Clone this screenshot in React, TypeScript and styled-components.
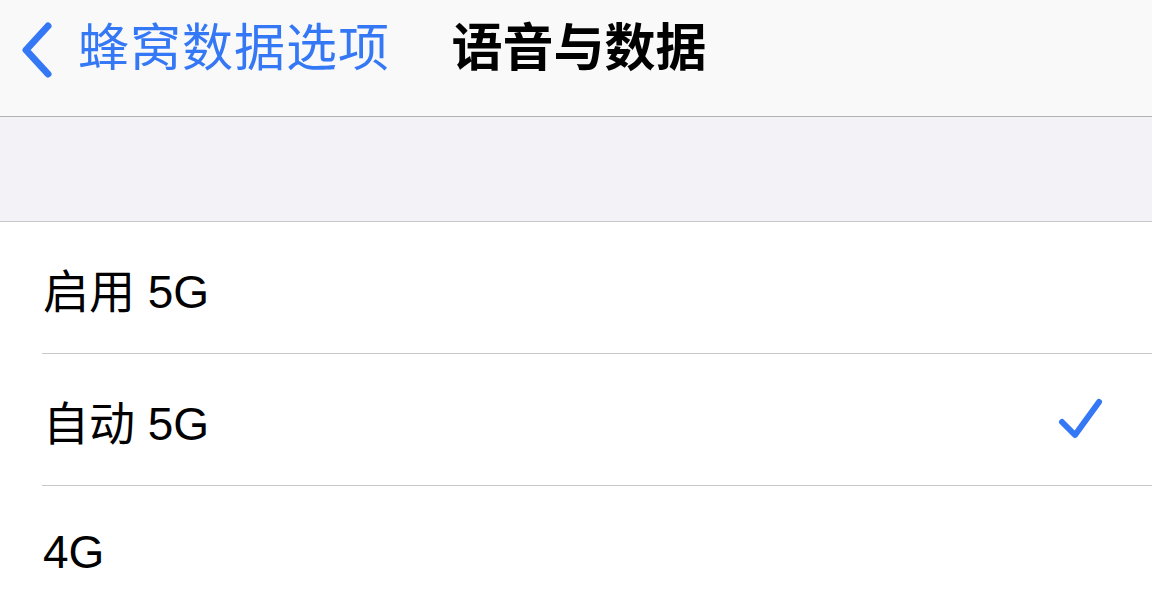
import React from 'react';
import styled, { createGlobalStyle } from 'styled-components';

const GlobalStyle = createGlobalStyle`
  html, body {
    margin: 0;
    padding: 0;
    background: #ffffff;
  }
  body {
    font-family: "Liberation Sans", "Noto Sans CJK SC", sans-serif;
    -webkit-font-smoothing: antialiased;
  }
`;

const Screen = styled.div`
  width: 1152px;
  height: 614px;
  overflow: hidden;
  display: flex;
  flex-direction: column;
  background: #ffffff;
`;

const NavBar = styled.div`
  position: relative;
  height: 100px;
  padding-bottom: 16px;
  flex-shrink: 0;
  display: flex;
  align-items: center;
  background: #f9f9f9;
  border-bottom: 1px solid #b2b2b2;
`;

const BackButton = styled.div`
  display: flex;
  align-items: center;
  gap: 24px;
  padding-left: 20px;
  color: #3478f6;
`;

const BackLabel = styled.span`
  margin-bottom: 12px;
  font-family: "Noto Sans CJK SC", sans-serif;
  font-size: 51px;
  letter-spacing: 1px;
`;

const NavTitle = styled.div`
  position: absolute;
  left: 0;
  right: 0;
  top: 0;
  bottom: 28px;
  display: flex;
  align-items: center;
  justify-content: center;
  padding-left: 6px;
  font-family: "Noto Sans CJK SC", sans-serif;
  font-weight: 700;
  font-size: 51px;
  color: #000000;
  pointer-events: none;
`;

const SectionGap = styled.div`
  height: 104px;
  flex-shrink: 0;
  background: #f2f2f7;
  border-bottom: 1px solid #c8c7cc;
`;

const List = styled.div`
  display: flex;
  flex-direction: column;
  padding-left: 42px;
  background: #ffffff;
`;

const Row = styled.div<{ $last?: boolean }>`
  height: 131px;
  display: flex;
  align-items: center;
  justify-content: space-between;
  padding-right: 48px;
  border-bottom: ${(p) => (p.$last ? 'none' : '1px solid #c8c7cc')};
`;

const RowLabel = styled.span`
  padding-left: 1px;
  font-size: 46px;
  color: #000000;
  font-family: "Liberation Sans", "Noto Sans CJK SC", sans-serif;
`;

const Chevron = () => (
  <svg width="34" height="58" viewBox="0 0 34 58" fill="none">
    <path
      d="M28 5 L6 29 L28 53"
      stroke="#3478f6"
      strokeWidth="7"
      strokeLinecap="round"
      strokeLinejoin="round"
    />
  </svg>
);

const Check = () => (
  <svg width="46" height="46" viewBox="0 0 46 46" fill="none">
    <path
      d="M4 25 L17 38 L41 5"
      stroke="#3478f6"
      strokeWidth="6"
      strokeLinecap="round"
      strokeLinejoin="round"
    />
  </svg>
);

const options = [
  { label: '启用 5G', checked: false },
  { label: '自动 5G', checked: true },
  { label: '4G', checked: false },
];

const App: React.FC = () => {
  return (
    <>
      <GlobalStyle />
      <Screen>
        <NavBar>
          <BackButton>
            <Chevron />
            <BackLabel>蜂窝数据选项</BackLabel>
          </BackButton>
          <NavTitle>语音与数据</NavTitle>
        </NavBar>
        <SectionGap />
        <List>
          {options.map((o, i) => (
            <Row key={o.label} $last={i === options.length - 1}>
              <RowLabel>{o.label}</RowLabel>
              {o.checked && <Check />}
            </Row>
          ))}
        </List>
      </Screen>
    </>
  );
};

export default App;
